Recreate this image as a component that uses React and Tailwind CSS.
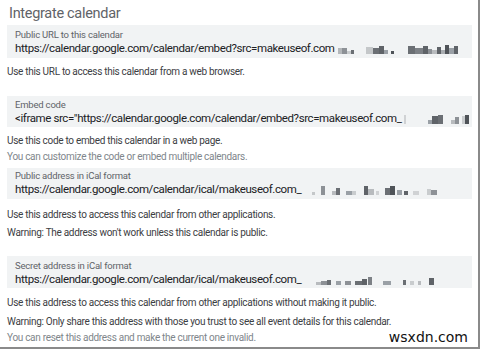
import React from 'react';

const Blur = ({ blocks }) => (
  <span className="inline-flex items-end ml-[3px] h-[10px]">
    {blocks.map(([w, h, c, gap], i) => (
      <span
        key={i}
        className="inline-block shrink-0"
        style={{ width: w, height: h, background: c, marginLeft: gap || 0 }}
      />
    ))}
  </span>
);

const Field = ({ label, value, blocks, className }) => (
  <div className={`bg-[#f1f3f4] w-[465px] pl-[8px] ${className}`}>
    <div className="text-[9.5px] leading-[12px] tracking-[-0.2px] text-[#5f6368]">{label}</div>
    <div className="text-[11.5px] leading-[15px] tracking-[-0.4px] text-[#202124] whitespace-nowrap overflow-hidden flex items-center">
      <span>{value}</span>
      <Blur blocks={blocks} />
    </div>
  </div>
);

const b1 = [
  [4, 6, '#b4b7ba'], [5, 6, '#8d9196'], [4, 3, '#c9ccce'], [3, 4, '#6b6f74'],
  [7, 7, '#c4c7c9', 12], [6, 6, '#6b6f74'], [5, 8, '#5f6368'], [4, 4, '#9aa0a6'], [3, 3, '#4f5358', 3],
  [7, 8, '#6b6f74', 14], [8, 6, '#7d8186'], [5, 8, '#5f6368'], [4, 5, '#8d9196'], [5, 4, '#b8bbbe'],
  [4, 7, '#5f6368'], [4, 4, '#a9adb1'], [4, 9, '#4f5358'], [5, 6, '#9aa0a6'], [4, 8, '#5f6368'],
];
const b2 = [
  [2, 9, '#d0d2d4', 0], [4, 4, '#9aa0a6', 22], [6, 8, '#5f6368'], [5, 9, '#6b6f74'],
  [4, 4, '#b8bbbe', 8], [4, 7, '#8d9196'], [3, 8, '#c9ccce', 3], [4, 9, '#4f5358'],
];
const b3 = [
  [3, 3, '#c4c7c9', 8], [4, 9, '#8d9196', 6], [4, 4, '#b8bbbe', 7], [4, 7, '#6b6f74'],
  [6, 4, '#9aa0a6', 6], [4, 4, '#c9ccce'], [4, 9, '#5f6368', 8], [6, 6, '#b8bbbe'],
  [3, 4, '#d0d2d4', 2], [5, 7, '#6b6f74', 6], [5, 9, '#4f5358'], [5, 5, '#9aa0a6', 2],
  [4, 4, '#5f6368', 2], [6, 4, '#d0d2d4', 5], [4, 6, '#c9ccce', 8], [6, 5, '#8d9196'],
];
const b4 = [
  [5, 3, '#b8bbbe', 12], [6, 4, '#8d9196'], [4, 5, '#6b6f74'], [5, 4, '#9aa0a6', 5],
  [6, 4, '#8d9196', 4], [7, 4, '#6b6f74', 4], [5, 6, '#5f6368'], [4, 8, '#7d8186', 1],
  [8, 4, '#9aa0a6', 11], [3, 5, '#6b6f74', 12], [4, 4, '#c9ccce', 4], [3, 4, '#b8bbbe', 4],
  [5, 7, '#5f6368', 8],
];

const Help = ({ children, className, muted }) => (
  <div className={`text-[10px] leading-[14px] tracking-[-0.3px] whitespace-nowrap ${muted ? 'text-[#80868b]' : 'text-[#3c4043]'} ${className}`}>
    {children}
  </div>
);

export default function App() {
  return (
    <div
      className="w-[480px] h-[349px] bg-white border-r-[2px] border-b-[2px] border-[#8a8a8a] pl-[7px] relative overflow-hidden"
      style={{ fontFamily: 'Roboto, "Liberation Sans", sans-serif' }}
    >
      <div className="pt-[3px] pl-[2px] text-[14.5px] leading-[22px] tracking-[-0.3px] text-[#5f6368]">Integrate calendar</div>

      <Field
        className="mt-[0px] pt-[4px] pb-[2px]"
        label="Public URL to this calendar"
        value="https://calendar.google.com/calendar/embed?src=makeuseof.com"
        blocks={b1}
      />
      <Help className="mt-[7px]">Use this URL to access this calendar from a web browser.</Help>

      <Field
        className="mt-[17px] pt-[3px] pb-[1px]"
        label="Embed code"
        value={'<iframe src="https://calendar.google.com/calendar/embed?src=makeuseof.com_'}
        blocks={b2}
      />
      <Help className="mt-[7px]">Use this code to embed this calendar in a web page.</Help>
      <Help className="mt-[2px]" muted>You can customize the code or embed multiple calendars.</Help>

      <Field
        className="mt-[4px] pt-[2px] pb-[2px]"
        label="Public address in iCal format"
        value="https://calendar.google.com/calendar/ical/makeuseof.com_"
        blocks={b3}
      />
      <Help className="mt-[9px]">Use this address to access this calendar from other applications.</Help>
      <Help className="mt-[4px]">Warning: The address won't work unless this calendar is public.</Help>

      <Field
        className="mt-[16px] pt-[4px] pb-[1px]"
        label="Secret address in iCal format"
        value="https://calendar.google.com/calendar/ical/makeuseof.com_"
        blocks={b4}
      />
      <Help className="mt-[8px]">Use this address to access this calendar from other applications without making it public.</Help>
      <Help className="mt-[5px]">Warning: Only share this address with those you trust to see all event details for this calendar.</Help>
      <Help className="mt-[2px]" muted>You can reset this address and make the current one invalid.</Help>

      <div className="absolute right-[10px] bottom-[1px] text-[14px] leading-[18px] text-[#111]" style={{ fontFamily: '"DejaVu Sans", sans-serif' }}>
        wsxdn.com
      </div>
    </div>
  );
}
